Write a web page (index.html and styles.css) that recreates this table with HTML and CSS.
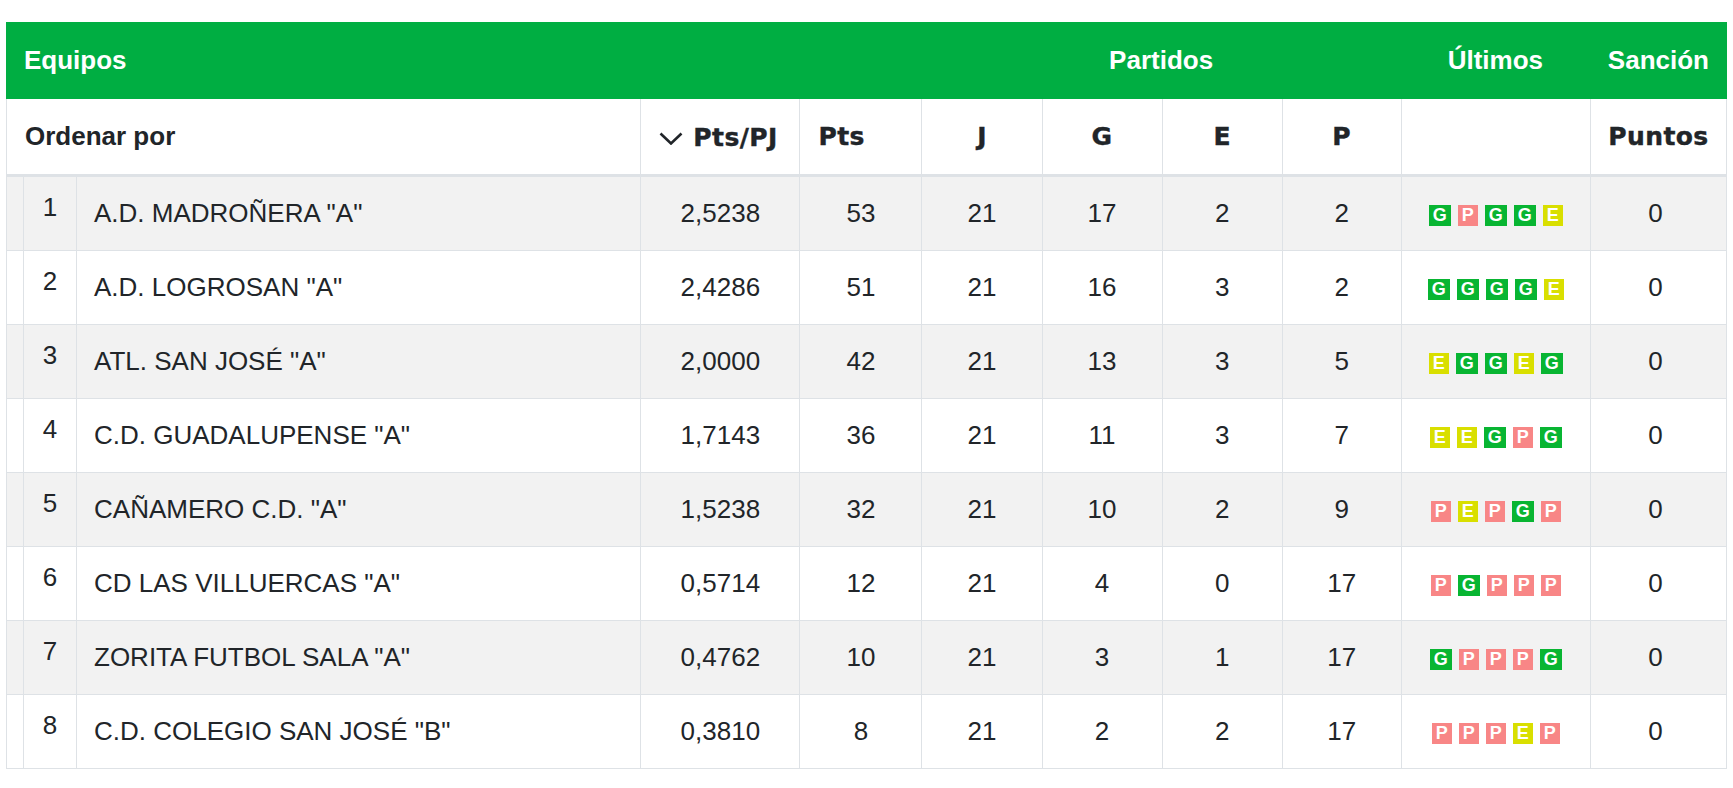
FILE: index.html
```html
<!DOCTYPE html>
<html lang="es">
<head>
<meta charset="utf-8">
<title>Clasificación</title>
<link rel="stylesheet" href="styles.css">
</head>
<body>
<table class="standings">
  <colgroup>
    <col class="c-gap"><col class="c-rank"><col class="c-name"><col class="c-ppj"><col class="c-pts">
    <col class="c-n"><col class="c-n"><col class="c-n"><col class="c-n2"><col class="c-last"><col class="c-san">
  </colgroup>
  <thead>
    <tr class="top">
      <th colspan="5" class="left">Equipos</th>
      <th colspan="4">Partidos</th>
      <th>Últimos</th>
      <th>Sanción</th>
    </tr>
    <tr class="sub">
      <th colspan="3" class="left order">Ordenar por</th>
      <th class="left sort"><span class="sorted"><svg class="chev" width="24" height="13" viewBox="0 0 24 13"><path d="M1.5 1.5 L12 11.5 L22.5 1.5" fill="none" stroke="#212529" stroke-width="2.6"/></svg>Pts/PJ</span></th>
      <th class="left sort">Pts</th>
      <th class="sort">J</th>
      <th class="sort">G</th>
      <th class="sort">E</th>
      <th class="sort">P</th>
      <th class="sort"></th>
      <th class="sort">Puntos</th>
    </tr>
  </thead>
  <tbody>
    <tr><td></td><td class="rank">1</td><td class="name">A.D. MADROÑERA "A"</td><td>2,5238</td><td>53</td><td>21</td><td>17</td><td>2</td><td>2</td><td><div class="form"><span class="b g">G</span><span class="b p">P</span><span class="b g">G</span><span class="b g">G</span><span class="b e">E</span></div></td><td class="san">0</td></tr>
    <tr><td></td><td class="rank">2</td><td class="name">A.D. LOGROSAN "A"</td><td>2,4286</td><td>51</td><td>21</td><td>16</td><td>3</td><td>2</td><td><div class="form"><span class="b g">G</span><span class="b g">G</span><span class="b g">G</span><span class="b g">G</span><span class="b e">E</span></div></td><td class="san">0</td></tr>
    <tr><td></td><td class="rank">3</td><td class="name">ATL. SAN JOSÉ "A"</td><td>2,0000</td><td>42</td><td>21</td><td>13</td><td>3</td><td>5</td><td><div class="form"><span class="b e">E</span><span class="b g">G</span><span class="b g">G</span><span class="b e">E</span><span class="b g">G</span></div></td><td class="san">0</td></tr>
    <tr><td></td><td class="rank">4</td><td class="name">C.D. GUADALUPENSE "A"</td><td>1,7143</td><td>36</td><td>21</td><td>11</td><td>3</td><td>7</td><td><div class="form"><span class="b e">E</span><span class="b e">E</span><span class="b g">G</span><span class="b p">P</span><span class="b g">G</span></div></td><td class="san">0</td></tr>
    <tr><td></td><td class="rank">5</td><td class="name">CAÑAMERO C.D. "A"</td><td>1,5238</td><td>32</td><td>21</td><td>10</td><td>2</td><td>9</td><td><div class="form"><span class="b p">P</span><span class="b e">E</span><span class="b p">P</span><span class="b g">G</span><span class="b p">P</span></div></td><td class="san">0</td></tr>
    <tr><td></td><td class="rank">6</td><td class="name">CD LAS VILLUERCAS "A"</td><td>0,5714</td><td>12</td><td>21</td><td>4</td><td>0</td><td>17</td><td><div class="form"><span class="b p">P</span><span class="b g">G</span><span class="b p">P</span><span class="b p">P</span><span class="b p">P</span></div></td><td class="san">0</td></tr>
    <tr><td></td><td class="rank">7</td><td class="name">ZORITA FUTBOL SALA "A"</td><td>0,4762</td><td>10</td><td>21</td><td>3</td><td>1</td><td>17</td><td><div class="form"><span class="b g">G</span><span class="b p">P</span><span class="b p">P</span><span class="b p">P</span><span class="b g">G</span></div></td><td class="san">0</td></tr>
    <tr><td></td><td class="rank">8</td><td class="name">C.D. COLEGIO SAN JOSÉ "B"</td><td>0,3810</td><td>8</td><td>21</td><td>2</td><td>2</td><td>17</td><td><div class="form"><span class="b p">P</span><span class="b p">P</span><span class="b p">P</span><span class="b e">E</span><span class="b p">P</span></div></td><td class="san">0</td></tr>
  </tbody>
</table>
</body>
</html>
```
FILE: styles.css
```css
html, body {
  margin: 0;
  padding: 0;
  background: #ffffff;
}
body {
  font-family: "Liberation Sans", Arial, sans-serif;
  color: #212529;
}
.standings {
  border-collapse: separate;
  border-spacing: 0;
  table-layout: fixed;
  width: 1721px;
  margin: 22px 0 0 6px;
  font-size: 26px;
}
.c-gap { width: 17px; }
.c-rank { width: 53px; }
.c-name { width: 564px; }
.c-ppj { width: 159px; }
.c-pts { width: 122px; }
.c-n { width: 120px; }
.c-n2 { width: 119px; }
.c-last { width: 189px; }
.c-san { width: 137px; }

.standings th, .standings td {
  box-sizing: border-box;
  padding: 0;
  text-align: center;
  vertical-align: middle;
  white-space: nowrap;
}
.standings .left { text-align: left; padding-left: 18px; }

.top th {
  background: #00ae42;
  color: #ffffff;
  font-weight: bold;
  height: 77px;
  font-size: 26px;
}
.top th:nth-child(2) { padding-left: 0; }

.sub th {
  height: 78px;
  background: #ffffff;
  border-left: 1px solid #dee2e6;
  border-bottom: 3px solid #dee2e6;
  font-weight: bold;
}
.sub th:last-child { border-right: 1px solid #dee2e6; }
.sub .sort {
  font-family: "DejaVu Sans", Verdana, sans-serif;
  font-size: 25px;
  letter-spacing: 0.4px;
  -webkit-text-stroke: 0.4px #212529;
}
.sorted { display: inline-flex; align-items: center; }
.chev { margin-right: 10px; margin-top: 2px; }

tbody td {
  height: 74px;
  border-left: 1px solid #dee2e6;
  border-bottom: 1px solid #dee2e6;
}
tbody td:last-child { border-right: 1px solid #dee2e6; }
tbody tr:nth-child(odd) td { background: #f2f2f2; }
tbody .rank { padding-bottom: 13px; }
tbody .name { text-align: left; padding-left: 17px; }
tbody .san { padding-right: 6px; }

.form {
  display: flex;
  justify-content: center;
  gap: 7px;
  padding-top: 3px;
}
.b {
  display: inline-block;
  color: #ffffff;
  font-weight: bold;
  font-size: 18px;
  line-height: 21px;
  height: 21px;
  padding: 0 4px;
}
.b.g { background: #08b532; }
.b.p { background: #f88686; }
.b.e { background: #d9df00; }
```
